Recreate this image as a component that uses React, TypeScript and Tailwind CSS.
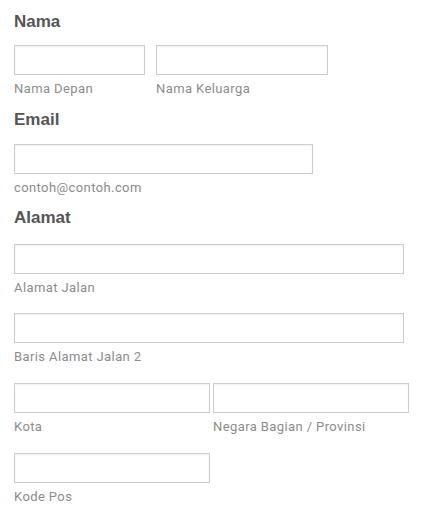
import React from "react";

const labelCls = "block text-[13px] leading-4 tracking-[0.4px] text-[#8c8c8c] mt-[6px] whitespace-nowrap";
const boxCls = "block h-[30px] border border-[#cdcdcd] bg-white shadow-[inset_0_1px_2px_rgba(0,0,0,0.06)]";
const headCls = "text-[17px] leading-5 font-bold text-[#555555]";

function Field({ label, w }: { label: string; w: string }) {
  return (
    <div className="flex flex-col">
      <input className={`${boxCls} ${w} outline-none`} />
      <span className={labelCls}>{label}</span>
    </div>
  );
}

export default function App() {
  return (
    <div
      className="w-[427px] h-[520px] bg-white pl-[14px] pt-[12px] overflow-hidden"
      style={{ fontFamily: "'Liberation Sans', Arial, sans-serif" }}
    >
      <div className="flex flex-col">
        <h2 className={headCls}>Nama</h2>
        <div className="flex gap-[11px] mt-[13px]" style={{ fontFamily: "Roboto, sans-serif" }}>
          <Field label="Nama Depan" w="w-[131px]" />
          <Field label="Nama Keluarga" w="w-[172px]" />
        </div>

        <h2 className={`${headCls} mt-[13px]`}>Email</h2>
        <div className="mt-[14px]" style={{ fontFamily: "Roboto, sans-serif" }}>
          <Field label="contoh@contoh.com" w="w-[299px]" />
        </div>

        <h2 className={`${headCls} mt-[12px]`}>Alamat</h2>
        <div className="flex flex-col gap-[17px] mt-[16px]" style={{ fontFamily: "Roboto, sans-serif" }}>
          <Field label="Alamat Jalan" w="w-[390px]" />
          <Field label="Baris Alamat Jalan 2" w="w-[390px]" />
          <div className="flex gap-[3px] mt-[1px]">
            <Field label="Kota" w="w-[196px]" />
            <Field label="Negara Bagian / Provinsi" w="w-[196px]" />
          </div>
          <div className="mt-[1px]">
            <Field label="Kode Pos" w="w-[196px]" />
          </div>
        </div>
      </div>
    </div>
  );
}
